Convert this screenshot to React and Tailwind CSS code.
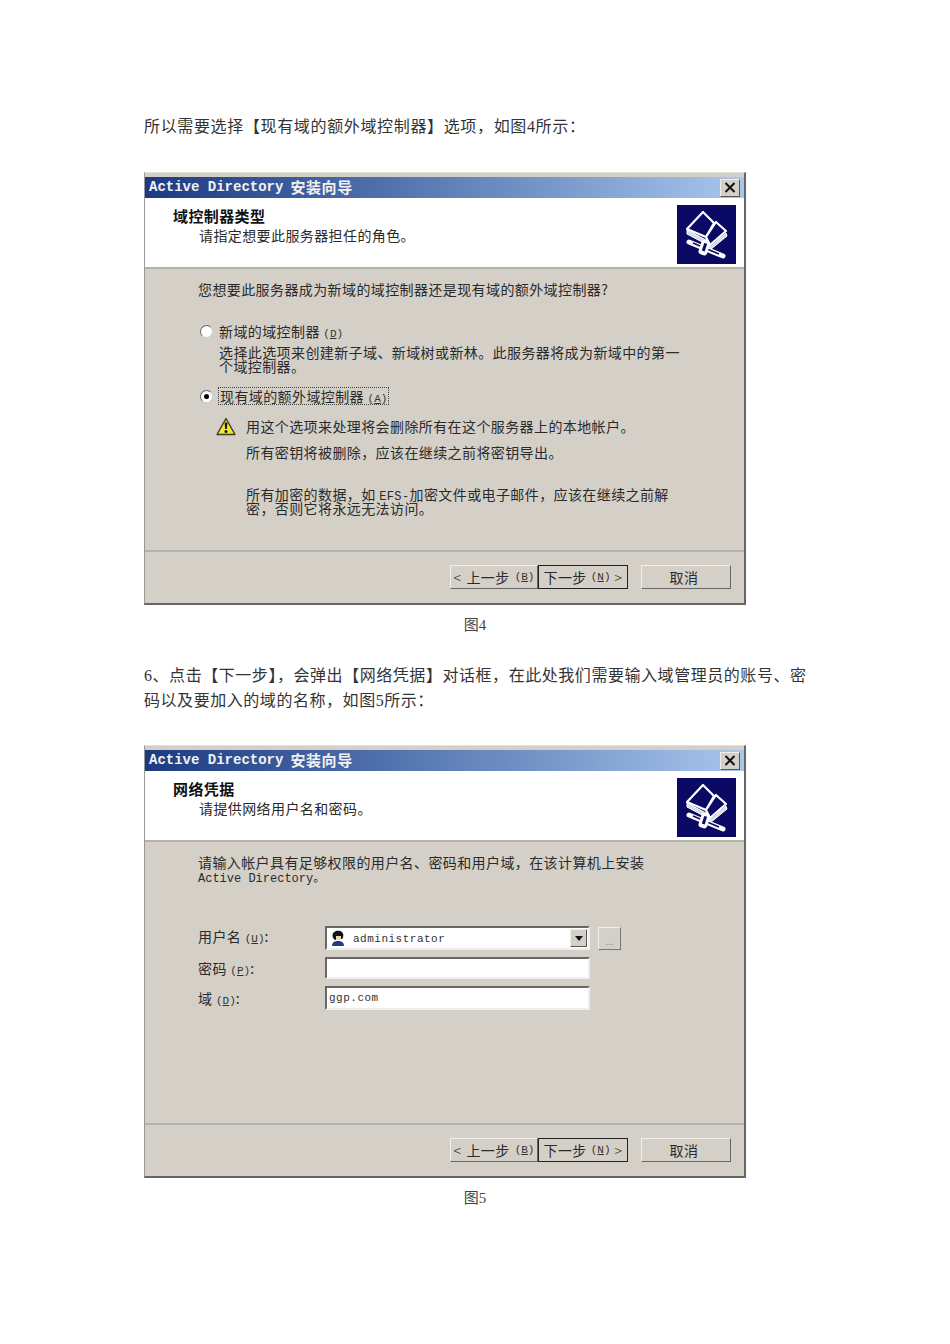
const DLG = { fontFamily: '"Noto Sans CJK SC", sans-serif' };
const MONO = { fontFamily: '"Liberation Mono", "Noto Sans CJK SC", monospace' };

function WizardIcon() {
  return (
    <svg width="59" height="59" viewBox="0 0 59 59" className="bg-[#0a0a64] shrink-0">
      <g stroke="#fff" strokeLinejoin="round">
        <path d="M10 24 L26 7 L37 18 L29 32 Z" fill="#0a0a64" strokeWidth="2.2" />
        <path d="M29 32 L39 17 L49 26 L33 40 Z" fill="#0a0a64" strokeWidth="2.2" />
        <path d="M10 25 L29 35 L33 42 L49 28 L50 31 L33 45 L27 38 L10 29 Z" fill="#d8dce8" strokeWidth="1" />
      </g>
      <path d="M12 37 L46 51" stroke="#fff" strokeWidth="5" strokeLinecap="round" />
      <path d="M16 38 L42 49" stroke="#0a0a64" strokeWidth="1.4" />
      <rect x="23" y="35" width="9" height="15" rx="3" fill="#fff" transform="rotate(18 27 42)" />
      <rect x="26" y="38" width="3" height="8" fill="#0a0a64" transform="rotate(18 27 42)" />
    </svg>
  );
}

function Warning() {
  return (
    <svg width="20" height="19" viewBox="0 0 20 19" className="shrink-0">
      <path d="M10 1.5 L19 17.5 L1 17.5 Z" fill="#f2e62e" stroke="#3a3a20" strokeWidth="1.4" strokeLinejoin="round" />
      <path d="M8.6 5.5 H11.4 L10.8 12 H9.2 Z" fill="#111" />
      <circle cx="10" cy="14.5" r="1.5" fill="#111" />
    </svg>
  );
}

function Radio({ checked }) {
  return (
    <span className="w-[13px] h-[13px] rounded-full bg-white border border-[#666] border-r-[#ccc] border-b-[#ccc] flex items-center justify-center shrink-0">
      {checked && <span className="w-[5px] h-[5px] rounded-full bg-black" />}
    </span>
  );
}

function Key({ children }) {
  return (
    <span className="text-[11px] leading-[1px] tracking-normal text-[#333]" style={MONO}>
      (<span className="underline">{children}</span>)
    </span>
  );
}

function Btn({ children, className = "", strong }) {
  return (
    <div
      className={
        "h-[24px] flex items-center justify-center text-[14px] text-[#2a2a2a] bg-[#d4d0c8] border " +
        (strong
          ? "border-[#222] border-[1.5px] "
          : "border-t-[#f2f0ec] border-l-[#f2f0ec] border-r-[#666] border-b-[#666] ") +
        className
      }
    >
      {children}
    </div>
  );
}

function Dialog({ heading, sub, children }) {
  return (
    <div
      className="w-[602px] h-[433px] flex flex-col bg-[#d4d0c8] border-r-2 border-b-2 border-r-[#666] border-b-[#666] border-l border-l-[#999] pt-[4px] border-t border-t-[#e4e2dc] shrink-0 tracking-[0.4px]"
      style={DLG}
    >
      <div className="h-[21px] flex items-center justify-between bg-gradient-to-r from-[#1c3a82] to-[#a9c6ec] pl-[4px] pr-[4px] shrink-0">
        <div className="flex items-center font-bold text-[14px] tracking-normal text-[#f2f2f2] whitespace-nowrap" style={MONO}>
          Active Directory<span className="ml-[7px] text-[15px] tracking-[0.6px]" style={DLG}>安装向导</span>
        </div>
        <div className="w-[20px] h-[18px] bg-[#d4d0c8] border border-t-[#eee] border-l-[#eee] border-r-[#555] border-b-[#555] flex items-center justify-center">
          <svg width="12" height="11" viewBox="0 0 12 11">
            <path d="M1.5 1 L10.5 10 M10.5 1 L1.5 10" stroke="#111" strokeWidth="2" />
          </svg>
        </div>
      </div>
      <div className="h-[71px] bg-white border-b-2 border-b-[#b4b1aa] flex justify-between pl-[28px] pr-[8px] pt-[7px] shrink-0">
        <div className="pt-[2px]">
          <div className="text-[15px] leading-[18px] font-bold text-[#111] whitespace-nowrap">{heading}</div>
          <div className="text-[14px] leading-[18px] text-[#2a2a2a] pl-[26px] mt-[1px] whitespace-nowrap">{sub}</div>
        </div>
        <WizardIcon />
      </div>
      <div className="flex-1 min-h-0 pl-[53px] text-[14px] text-[#2a2a2a] border-b-2 border-b-[#b4b1aa]">{children}</div>
      <div className="h-[51px] flex items-start pt-[13px] pl-[305px] shrink-0">
        <Btn className="w-[88px] gap-[5px]">
          <span className="font-light">&lt;</span> 上一步 <Key>B</Key>
        </Btn>
        <Btn strong className="w-[90px] gap-[4px]">
          下一步 <Key>N</Key> <span className="font-light">&gt;</span>
        </Btn>
        <Btn className="w-[90px] ml-[13px] pr-[4px]">取消</Btn>
      </div>
    </div>
  );
}

function Field({ label, k, className = "", labelClass = "", children }) {
  return (
    <div className={"flex items-center " + className}>
      <div className={"w-[127px] whitespace-nowrap text-[14px] leading-[18px] text-[#2a2a2a] " + labelClass}>
        {label} <Key>{k}</Key>:
      </div>
      {children}
    </div>
  );
}

const INPUT = "w-[265px] bg-white border-2 border-t-[#666] border-l-[#666] border-r-[#eee] border-b-[#eee]";

export default function App() {
  return (
    <div className="min-h-[1344px] bg-white pl-[144px] pt-[116px] text-[16px] text-[#333]" style={{ fontFamily: '"Liberation Serif", "Noto Sans CJK SC", serif' }}>
      <p className="leading-[22px] tracking-[0.65px] whitespace-nowrap">所以需要选择【现有域的额外域控制器】选项，如图4所示：</p>
      <div className="mt-[34px]">
        <Dialog heading="域控制器类型" sub="请指定想要此服务器担任的角色。">
          <div className="pt-[12px] leading-[16px] whitespace-nowrap">您想要此服务器成为新域的域控制器还是现有域的额外域控制器?</div>
          <div className="mt-[26px] ml-[2px] flex items-center gap-[6px] leading-[16px]">
            <Radio />
            <span>新域的域控制器 <Key>D</Key></span>
          </div>
          <div className="mt-[6px] ml-[21px] w-[464px] leading-[14px]">选择此选项来创建新子域、新域树或新林。此服务器将成为新域中的第一个域控制器。</div>
          <div className="mt-[14px] ml-[2px] flex items-center gap-[5px] leading-[16px]">
            <Radio checked />
            <span className="border border-dotted border-[#444] px-[1px]">现有域的额外域控制器 <Key>A</Key></span>
          </div>
          <div className="mt-[13px] ml-[18px] flex gap-[10px]">
            <div className="mt-[-1px]"><Warning /></div>
            <div className="w-[430px]">
              <div className="leading-[16px]">用这个选项来处理将会删除所有在这个服务器上的本地帐户。</div>
              <div className="mt-[10px] leading-[16px]">所有密钥将被删除，应该在继续之前将密钥导出。</div>
              <div className="mt-[27px] leading-[14px]">
                所有加密的数据，如 <span style={MONO} className="text-[12px] leading-[1px]">EFS-</span>加密文件或电子邮件，应该在继续之前解密，否则它将永远无法访问。
              </div>
            </div>
          </div>
        </Dialog>
      </div>
      <p className="mt-[9px] w-[662px] text-center leading-[22px] text-[#444] text-[15px]">图4</p>
      <p className="mt-[27px] w-[665px] leading-[25px] tracking-[0.55px]">6、点击【下一步】，会弹出【网络凭据】对话框，在此处我们需要输入域管理员的账号、密码以及要加入的域的名称，如图5所示：</p>
      <div className="mt-[32px]">
        <Dialog heading="网络凭据" sub="请提供网络用户名和密码。">
          <div className="pt-[13px] leading-[15px] w-[470px]">
            请输入帐户具有足够权限的用户名、密码和用户域，在该计算机上安装
            <div className="mt-[2px] text-[12px] tracking-normal" style={MONO}>Active Directory。</div>
          </div>
          <Field label="用户名" k="U" className="mt-[39px]" labelClass="pb-[4px]">
            <div className={INPUT + " h-[24px] flex items-center pl-[3px] pr-[1px]"}>
              <svg width="16" height="17" viewBox="0 0 16 17" className="shrink-0">
                <path d="M3 8 C1 2 6 0 10 1 C14 2 14 7 12 9 L5 10 Z" fill="#111" />
                <path d="M6 6 H11 V10 H6 Z" fill="#e8d8c0" />
                <path d="M2 16 C2 12 5 11 8 11 C11 11 14 12 14 16 Z" fill="#223a8a" />
              </svg>
              <span className="ml-[7px] pt-[3px] flex-1 text-[11px] tracking-[0.5px] text-[#333]" style={MONO}>administrator</span>
              <div className="w-[17px] h-[18px] bg-[#d4d0c8] border border-t-[#eee] border-l-[#eee] border-r-[#555] border-b-[#555] flex items-center justify-center">
                <svg width="8" height="5" viewBox="0 0 8 5"><path d="M0 0 H8 L4 5 Z" fill="#111" /></svg>
              </div>
            </div>
            <div className="ml-[8px] w-[23px] h-[23px] bg-[#d4d0c8] border border-t-[#eee] border-l-[#eee] border-r-[#777] border-b-[#777] flex items-end justify-center text-[9px] leading-[14px] text-[#888]">...</div>
          </Field>
          <Field label="密码" k="P" className="mt-[7px]">
            <div className={INPUT + " h-[22px]"} />
          </Field>
          <Field label="域" k="D" className="mt-[7px]">
            <div className={INPUT + " h-[24px] flex items-center pl-[2px] text-[11px] tracking-[0.5px] text-[#333]"} style={MONO}>ggp.com</div>
          </Field>
        </Dialog>
      </div>
      <p className="mt-[9px] w-[662px] text-center leading-[22px] text-[#444] text-[15px]">图5</p>
    </div>
  );
}
